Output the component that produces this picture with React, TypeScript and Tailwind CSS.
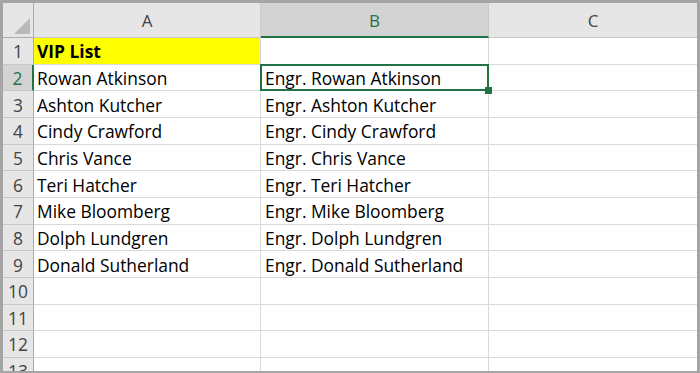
import React from "react";

const names = [
  "Rowan Atkinson",
  "Ashton Kutcher",
  "Cindy Crawford",
  "Chris Vance",
  "Teri Hatcher",
  "Mike Bloomberg",
  "Dolph Lundgren",
  "Donald Sutherland",
];

type Row = { a: string; b: string; n: number };

const rows: Row[] = [
  { n: 1, a: "VIP List", b: "" },
  ...names.map((x, i) => ({ n: i + 2, a: x, b: "Engr. " + x })),
  { n: 10, a: "", b: "" },
  { n: 11, a: "", b: "" },
  { n: 12, a: "", b: "" },
  { n: 13, a: "", b: "" },
];

export default function App() {
  return (
    <div
      className="w-[700px] h-[373px] overflow-hidden bg-white border-[3px] border-b-2 border-[#a5a5a5] flex flex-col"
      style={{ fontFamily: "'Open Sans', 'Liberation Sans', sans-serif" }}
    >
      {/* Header row */}
      <div className="flex h-[35px] shrink-0 text-[17px] text-[#444]">
        <div className="w-[31px] bg-[#e6e6e6] border-r border-b border-[#ababab] relative">
          <svg className="absolute left-[11px] top-[15px]" width="17" height="17" viewBox="0 0 17 17">
            <polygon points="0,16 16,0 16,16" fill="#b9b9b9" />
          </svg>
        </div>
        <div className="w-[227px] bg-[#e6e6e6] border-r border-b border-[#c8c8c8] flex items-center justify-center pt-[2px]">
          A
        </div>
        <div className="w-[228px] bg-[#d3d3d3] border-r border-[#c8c8c8] border-b-2 border-b-[#217346] flex items-center justify-center pt-[2px] text-[#217346]">
          B
        </div>
        <div className="w-[208px] bg-[#e6e6e6] border-b border-[#c8c8c8] flex items-center justify-center pt-[2px]">
          C
        </div>
      </div>
      {rows.map((r) => {
        const sel = r.n === 2;
        return (
          <div key={r.n} className="flex h-[26.67px] shrink-0 text-[17.4px] leading-none">
            <div
              className={
                sel
                  ? "w-[31px] bg-[#d3d3d3] border-r-2 border-r-[#217346] border-b border-b-[#c8c8c8] flex items-end justify-center pb-[3px] text-[#217346]"
                  : "w-[31px] bg-[#e6e6e6] border-r border-r-[#ababab] border-b border-b-[#c8c8c8] flex items-end justify-center pb-[3px] text-[#444]"
              }
            >
              {r.n}
            </div>
            <div
              className={
                r.n === 1
                  ? "w-[227px] bg-[#ffff00] border-r border-b border-[#d9d9d9] flex items-end pl-[3px] pb-[3px] font-bold text-black"
                  : "w-[227px] border-r border-b border-[#d9d9d9] flex items-end pl-[3px] pb-[3px] text-black"
              }
            >
              {r.a}
            </div>
            <div className="w-[228px] relative border-r border-b border-[#d9d9d9] flex items-end pl-[4px] pb-[3px] text-black">
              {r.b}
              {sel && (
                <>
                  <div className="absolute z-10 left-[-1px] top-[-1px] right-[-1px] bottom-[-1px] border-2 border-[#217346]" />
                  <div className="absolute z-10 right-[-4px] bottom-[-4px] w-[7px] h-[7px] bg-[#217346]" />
                </>
              )}
            </div>
            <div className="w-[208px] border-b border-[#d9d9d9]" />
          </div>
        );
      })}
    </div>
  );
}
